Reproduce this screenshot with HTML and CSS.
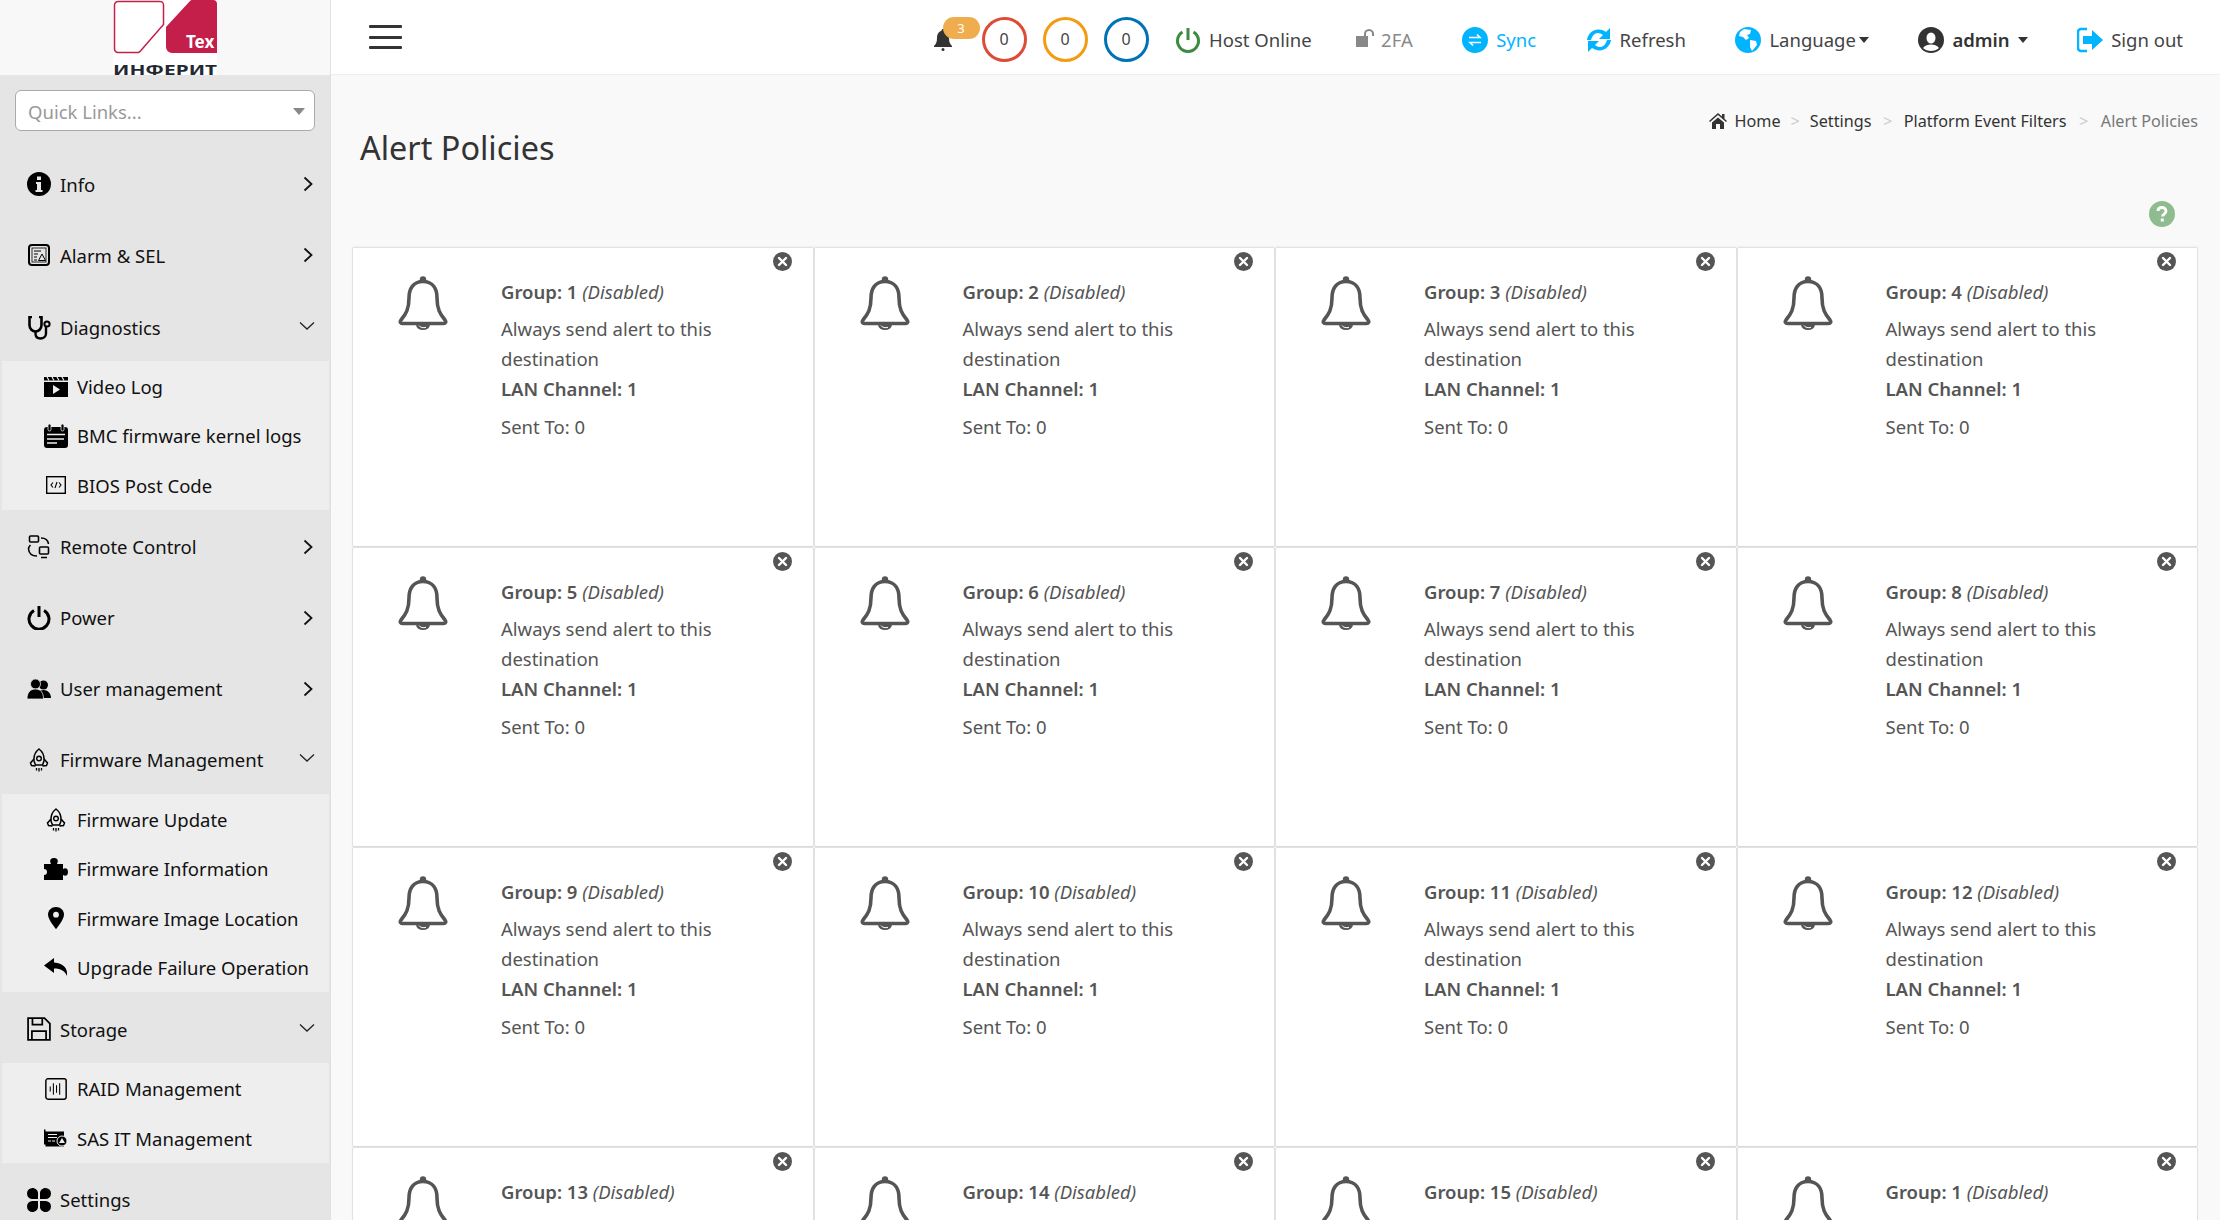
FILE: index.html
```html
<!DOCTYPE html>
<html lang="en">
<head>
<meta charset="utf-8">
<title>Alert Policies</title>
<link rel="stylesheet" href="styles.css">
</head>
<body>
<svg class="sprite" xmlns="http://www.w3.org/2000/svg">
  <symbol id="bell" viewBox="0 0 50 54">
    <circle cx="25" cy="3.500" r="3.200" fill="#555"/>
    <path d="M25 5.500C15 5.500 11 13 11 22c0 11-3 16-8 22-1.500 2-.5 3.500 1.500 3.500h41c2 0 3-1.500 1.500-3.500-5-6-8-11-8-22 0-9-4-16.500-14-16.500Z" fill="#fff" stroke="#555" stroke-width="3.600" stroke-linejoin="round"/>
    <path d="M18 48.500a7 5.500 0 0 0 14 0Z" fill="#555"/>
    <path d="M21 49.500a5 3.500 0 0 0 7 1.800" fill="none" stroke="#fff" stroke-width="1"/>
  </symbol>
  <symbol id="close" viewBox="0 0 19 19">
    <circle cx="9.500" cy="9.500" r="9.500" fill="#555"/>
    <path d="M6 6l7 7M13 6l-7 7" stroke="#fff" stroke-width="2.400" stroke-linecap="round"/>
  </symbol>
  <symbol id="chev-r" viewBox="0 0 10 16"><path d="M1.500 1.500 8.500 8l-7 6.500" fill="none" stroke="#111" stroke-width="1.800"/></symbol>
  <symbol id="chev-d" viewBox="0 0 16 10"><path d="M1 1.500 8 8l7-6.500" fill="none" stroke="#222" stroke-width="1.300"/></symbol>
  <symbol id="i-info" viewBox="0 0 24 24"><circle cx="12" cy="12" r="12" fill="#000"/><path d="M10 4.500h4v3.500h-4zM9 10h5v8h1.500v2h-7v-2H10v-6H9z" fill="#e5e5e5"/></symbol>
  <symbol id="i-alarm" viewBox="0 0 24 24"><rect x="2" y="2" width="20" height="20" rx="3" fill="none" stroke="#000" stroke-width="2"/><rect x="5" y="5" width="14" height="14" fill="none" stroke="#000" stroke-width=".8"/><path d="M7 8h7M7 11h4M7 14h3M7 17h3" stroke="#000" stroke-width="1"/><path d="M15 11l3.500 6.500h-7Z" fill="none" stroke="#000" stroke-width="1"/></symbol>
  <symbol id="i-steth" viewBox="0 0 24 24"><path d="M5 1H2.500v8c0 4 3 6.500 6 6.500s6-2.500 6-6.500V1H12" fill="none" stroke="#000" stroke-width="2.600"/><path d="M8.500 15.500v2c0 3 2 5 5 5s5.500-2 5.500-5V10" fill="none" stroke="#000" stroke-width="2.400"/><circle cx="20" cy="8" r="2.600" fill="none" stroke="#000" stroke-width="2"/></symbol>
  <symbol id="i-video" viewBox="0 0 24 20"><path d="M0 5h24v15H0z" fill="#000"/><path d="M0 0h24v3.500H0z" fill="#000"/><path d="M3 0l2 3.500M8 0l2 3.500M13 0l2 3.500M18 0l2 3.500" stroke="#eee" stroke-width="1.200"/><path d="M9 8l7 4.500-7 4.500z" fill="#eee"/></symbol>
  <symbol id="i-cal" viewBox="0 0 24 24"><rect y="3" width="24" height="21" rx="3" fill="#000"/><rect x="4" y="0" width="3" height="7" rx="1.500" fill="#000" stroke="#eee" stroke-width=".8"/><rect x="17" y="0" width="3" height="7" rx="1.500" fill="#000" stroke="#eee" stroke-width=".8"/><path d="M3 10.500h18M3 15h17M3 19h10" stroke="#eee" stroke-width="1.500"/></symbol>
  <symbol id="i-bios" viewBox="0 0 20 18"><rect x=".7" y=".7" width="18.600" height="16.600" fill="none" stroke="#000" stroke-width="1.400"/><path d="M7 6.500 5 9l2 2.500M13 6.500 15 9l-2 2.500M11 6l-2 6" fill="none" stroke="#000" stroke-width="1.100"/></symbol>
  <symbol id="i-remote" viewBox="0 0 24 24"><rect x="2.500" y="1" width="9" height="6" rx="1" fill="none" stroke="#000" stroke-width="1.600"/><rect x="12.500" y="12" width="9" height="7" rx="1" fill="none" stroke="#000" stroke-width="1.600"/><path d="M14 22.500h6M14 3c4 0 7 2 7.500 6M10 21c-4 0-8-2-8.500-7 0-2 1-3 2-4" fill="none" stroke="#000" stroke-width="1.600"/></symbol>
  <symbol id="i-power" viewBox="0 0 24 24"><path d="M7 4.500a10 10 0 1 0 10 0" fill="none" stroke="#000" stroke-width="3"/><path d="M12 0v11" stroke="#000" stroke-width="3"/></symbol>
  <symbol id="i-users" viewBox="0 0 24 20"><circle cx="16.500" cy="6" r="4.500" fill="#000"/><path d="M10 19c0-5 2.500-8 6.500-8s7.500 3 7.500 8z" fill="#000"/><circle cx="8.500" cy="5" r="5" fill="#000" stroke="#e5e5e5" stroke-width=".8"/><path d="M0 20c0-6 3-10 8.500-10s8 4 8 10z" fill="#000" stroke="#e5e5e5" stroke-width=".8"/></symbol>
  <symbol id="i-rocket" viewBox="0 0 24 24"><path d="M12 1c4 3 5.500 7 5 12l-1.500 4h-7L7 13C6.500 8 8 4 12 1Z" fill="none" stroke="#000" stroke-width="1.500"/><path d="M7 11 3.500 15l1 2.500 4 .5M17 11l3.500 4-1 2.500-4 .5" fill="none" stroke="#000" stroke-width="1.500"/><circle cx="12" cy="10.500" r="2.300" fill="none" stroke="#000" stroke-width="1.400"/><path d="M9.500 20v2.500M12 20v3.500M14.500 20v2.500" stroke="#000" stroke-width="1.300"/></symbol>
  <symbol id="i-puzzle" viewBox="0 0 24 22"><path d="M0 6h7c-2-4 0-6 3-6s5 2 3 6h6v5c3-2 5 0 5 3s-2 5-5 3v5H0v-5c2 0 3-1 3-3s-1-3-3-3z" fill="#000"/></symbol>
  <symbol id="i-pin" viewBox="0 0 16 22"><path d="M8 0c4.500 0 8 3.300 8 7.700C16 12.500 8 22 8 22S0 12.500 0 7.700C0 3.300 3.500 0 8 0Z" fill="#000"/><circle cx="8" cy="7.700" r="2.900" fill="#eee"/></symbol>
  <symbol id="i-reply" viewBox="0 0 24 18"><path d="M10 0 0 7.500 10 15v-4.500c7 0 11 2.500 13 7.500 1-8-4-13-13-13.500z" fill="#000"/></symbol>
  <symbol id="i-save" viewBox="0 0 22 22"><path d="M1 1h15l5 5v15H1z" fill="none" stroke="#000" stroke-width="1.600"/><path d="M5 1v6h9V1M4.500 21v-8h13v8" fill="none" stroke="#000" stroke-width="1.600"/></symbol>
  <symbol id="i-raid" viewBox="0 0 21 21"><rect x=".8" y=".8" width="19.400" height="19.400" rx="2" fill="none" stroke="#000" stroke-width="1.400"/><path d="M5 8v5M8 5v11M11 7v7M14 5v11" stroke="#000" stroke-width="1"/></symbol>
  <symbol id="i-sas" viewBox="0 0 24 17"><path d="M0 0h1.500v2H20v15H1.500v-2H0z" fill="#000"/><circle cx="18" cy="11.500" r="5" fill="#000" stroke="#eee" stroke-width="1"/><path d="M18 8.500l3 5h-6z" fill="#eee"/><path d="M4 5h9M4 8h9M4 11.500h3M8 11.500h3" stroke="#eee" stroke-width="1.200"/></symbol>
  <symbol id="i-settings" viewBox="0 0 24 24"><path d="M5.500 0C8.500 0 11 2.500 11 5v6H5.500a5.500 5.500 0 0 1 0-11zM18.500 0a5.500 5.500 0 0 1 0 11H13V5c0-2.500 2.500-5 5.500-5zM5.500 13H11v6c0 2.500-2.500 5-5.500 5a5.500 5.500 0 0 1 0-11zM13 13h5.500a5.500 5.500 0 0 1 0 11C15.500 24 13 21.500 13 19z" fill="#000"/></symbol>
</svg>

<aside class="sidebar">
  <div class="brand">
    <svg class="logo" viewBox="0 0 104 75" xmlns="http://www.w3.org/2000/svg">
      <rect width="104" height="75" fill="#fff"/>
      <path d="M5 1.500h42a3.500 3.500 0 0 1 3.500 3.500v19.500L27 51.500a3 3 0 0 1-2 1H5A3.500 3.500 0 0 1 1.500 49V5A3.500 3.500 0 0 1 5 1.500Z" fill="#fff" stroke="#c41e4a" stroke-width="1.500"/>
      <path d="M53 27 77 1a3 3 0 0 1 2-1h21a4 4 0 0 1 4 4v49H59a6 6 0 0 1-6-6Z" fill="#c41e4a"/>
      <text x="73" y="48" class="logo-tex">Tex</text>
      <text x="0" y="74.500" class="logo-name" textLength="104" lengthAdjust="spacingAndGlyphs">ИНФЕРИТ</text>
    </svg>
  </div>
  <div class="quick"><div class="quick-box"><span>Quick Links...</span><i class="quick-caret"></i></div></div>
  <nav class="nav">
    <a class="row"><svg class="ic w24"><use href="#i-info"/></svg><span class="label">Info</span><svg class="chev-r"><use href="#chev-r"/></svg></a>
    <a class="row"><svg class="ic w24"><use href="#i-alarm"/></svg><span class="label">Alarm &amp; SEL</span><svg class="chev-r"><use href="#chev-r"/></svg></a>
    <a class="row open"><svg class="ic w24"><use href="#i-steth"/></svg><span class="label">Diagnostics</span><svg class="chev-d"><use href="#chev-d"/></svg></a>
    <div class="sub">
      <a class="subrow"><svg class="ic w24 h20"><use href="#i-video"/></svg><span>Video Log</span></a>
      <a class="subrow"><svg class="ic w24"><use href="#i-cal"/></svg><span>BMC firmware kernel logs</span></a>
      <a class="subrow"><svg class="ic w24 h18"><use href="#i-bios"/></svg><span>BIOS Post Code</span></a>
    </div>
    <a class="row"><svg class="ic w24"><use href="#i-remote"/></svg><span class="label">Remote Control</span><svg class="chev-r"><use href="#chev-r"/></svg></a>
    <a class="row"><svg class="ic w24"><use href="#i-power"/></svg><span class="label">Power</span><svg class="chev-r"><use href="#chev-r"/></svg></a>
    <a class="row"><svg class="ic w24 h20"><use href="#i-users"/></svg><span class="label">User management</span><svg class="chev-r"><use href="#chev-r"/></svg></a>
    <a class="row open"><svg class="ic w24"><use href="#i-rocket"/></svg><span class="label">Firmware Management</span><svg class="chev-d"><use href="#chev-d"/></svg></a>
    <div class="sub">
      <a class="subrow"><svg class="ic w24"><use href="#i-rocket"/></svg><span>Firmware Update</span></a>
      <a class="subrow"><svg class="ic w24 h22"><use href="#i-puzzle"/></svg><span>Firmware Information</span></a>
      <a class="subrow"><svg class="ic w24 h22"><use href="#i-pin"/></svg><span>Firmware Image Location</span></a>
      <a class="subrow"><svg class="ic w24 h18"><use href="#i-reply"/></svg><span>Upgrade Failure Operation</span></a>
    </div>
    <a class="row open"><svg class="ic w24"><use href="#i-save"/></svg><span class="label">Storage</span><svg class="chev-d"><use href="#chev-d"/></svg></a>
    <div class="sub">
      <a class="subrow"><svg class="ic w24 h22"><use href="#i-raid"/></svg><span>RAID Management</span></a>
      <a class="subrow"><svg class="ic w24 h18"><use href="#i-sas"/></svg><span>SAS IT Management</span></a>
    </div>
    <a class="row"><svg class="ic w24"><use href="#i-settings"/></svg><span class="label">Settings</span></a>
  </nav>
</aside>

<main class="main">
  <header class="topbar">
    <button class="burger" aria-label="Menu"><i></i><i></i><i></i></button>
    <div class="status">
      <span class="notify">
        <svg class="notify-bell" viewBox="0 0 18 22" xmlns="http://www.w3.org/2000/svg"><path d="M9 0c1 0 1.500.7 1.500 1.700C14 3 15 6 15 9c0 4 1 6 3 8v1H0v-1c2-2 3-4 3-8 0-3 1-6 4.500-7.300C7.500.7 8 0 9 0Z" fill="#333"/><circle cx="9" cy="20.500" r="1.500" fill="#333"/></svg>
        <b class="badge">3</b>
      </span>
      <span class="ring red">0</span>
      <span class="ring orange">0</span>
      <span class="ring blue">0</span>
    </div>
    <a class="tb host"><svg class="tb-ic" viewBox="0 0 26 26" xmlns="http://www.w3.org/2000/svg"><path d="M7.500 5a10.500 10.500 0 1 0 11 0" fill="none" stroke="#3d8b40" stroke-width="3"/><path d="M13 1v12" stroke="#3d8b40" stroke-width="3"/></svg>Host Online</a>
    <a class="tb tfa"><svg class="tb-ic lock" viewBox="0 0 20 18" xmlns="http://www.w3.org/2000/svg"><path d="M0 7h12v11H0z" fill="#888"/><path d="M9 7V5c0-2 1.500-4 4-4s4 2 4 4v2" fill="none" stroke="#888" stroke-width="2"/></svg>2FA</a>
    <a class="tb sync"><svg class="tb-ic" viewBox="0 0 26 26" xmlns="http://www.w3.org/2000/svg"><circle cx="13" cy="13" r="13" fill="#00b4ff"/><path d="M7 10.500h11l-3-3M19 15.500H8l3 3" fill="none" stroke="#fff" stroke-width="1.600"/></svg>Sync</a>
    <a class="tb"><svg class="tb-ic" viewBox="0 1 26 24" xmlns="http://www.w3.org/2000/svg"><path d="M1 13C2 5 11-1 20 5l4-4v11H13l4-4c-5-4-10-2-12 5zM25 13c-1 8-10 14-19 8l-4 4V14h11l-4 4c5 4 10 2 12-5z" fill="#00b4ff"/></svg>Refresh</a>
    <a class="tb"><svg class="tb-ic" viewBox="0 0 26 26" xmlns="http://www.w3.org/2000/svg"><circle cx="13" cy="13" r="13" fill="#00b4ff"/><path d="M9 2l7 1-1 4-3 1 2 3-3 2-3-3-4-1 1-4zM15 13l6 1 1 4-5 6-2-4z" fill="#fff"/></svg>Language<i class="caret"></i></a>
    <a class="tb admin"><svg class="tb-ic" viewBox="0 0 26 26" xmlns="http://www.w3.org/2000/svg"><circle cx="13" cy="13" r="13" fill="#333"/><ellipse cx="13" cy="11" rx="4.500" ry="5.500" fill="#fff"/><path d="M5 21c2-3 5-3.500 8-3.500s6 .5 8 3.500c-4 4-12 4-16 0z" fill="#fff"/></svg><b>admin</b><i class="caret wide"></i></a>
    <a class="tb"><svg class="tb-ic" viewBox="0 0 26 26" xmlns="http://www.w3.org/2000/svg"><path d="M10 2H4a3 3 0 0 0-3 3v16a3 3 0 0 0 3 3h6" fill="none" stroke="#00b4ff" stroke-width="2.500"/><path d="M6 9h9V3l11 10-11 10v-6H6z" fill="#00b4ff"/></svg>Sign out</a>
  </header>

  <section class="head">
    <h1 class="title">Alert Policies</h1>
    <ol class="crumbs">
      <li><svg class="home" viewBox="0 0 18 16" xmlns="http://www.w3.org/2000/svg"><path d="M9 0l4 3.500V1h2.500v4.700L18 8l-1 1-8-7-8 7-1-1zM3 9.500l6-5 6 5V16h-4v-5H7v5H3z" fill="#333"/></svg>Home</li>
      <li class="sep first">&gt;</li><li>Settings</li>
      <li class="sep second">&gt;</li><li>Platform Event Filters</li>
      <li class="sep">&gt;</li><li class="current">Alert Policies</li>
    </ol>
  </section>
  <div class="helprow"><svg class="help" viewBox="0 0 26 26" xmlns="http://www.w3.org/2000/svg"><circle cx="13" cy="13" r="13" fill="#8fbc8f"/><path d="M9 10c0-2.500 2-3.500 4-3.500s4 1.200 4 3.500c0 3-3.500 3-3.500 5.500" fill="none" stroke="#fff" stroke-width="2.800"/><rect x="11.800" y="17.500" width="3" height="3" fill="#fff"/></svg></div>

  <div class="grid">
    <article class="card"><svg class="x"><use href="#close"/></svg><svg class="bell"><use href="#bell"/></svg><div class="info"><p class="g"><b>Group: 1</b> <em>(Disabled)</em></p><p class="d">Always send alert to this destination</p><p class="l">LAN Channel: 1</p><p class="s">Sent To: 0</p></div></article>
    <article class="card"><svg class="x"><use href="#close"/></svg><svg class="bell"><use href="#bell"/></svg><div class="info"><p class="g"><b>Group: 2</b> <em>(Disabled)</em></p><p class="d">Always send alert to this destination</p><p class="l">LAN Channel: 1</p><p class="s">Sent To: 0</p></div></article>
    <article class="card"><svg class="x"><use href="#close"/></svg><svg class="bell"><use href="#bell"/></svg><div class="info"><p class="g"><b>Group: 3</b> <em>(Disabled)</em></p><p class="d">Always send alert to this destination</p><p class="l">LAN Channel: 1</p><p class="s">Sent To: 0</p></div></article>
    <article class="card"><svg class="x"><use href="#close"/></svg><svg class="bell"><use href="#bell"/></svg><div class="info"><p class="g"><b>Group: 4</b> <em>(Disabled)</em></p><p class="d">Always send alert to this destination</p><p class="l">LAN Channel: 1</p><p class="s">Sent To: 0</p></div></article>
    <article class="card"><svg class="x"><use href="#close"/></svg><svg class="bell"><use href="#bell"/></svg><div class="info"><p class="g"><b>Group: 5</b> <em>(Disabled)</em></p><p class="d">Always send alert to this destination</p><p class="l">LAN Channel: 1</p><p class="s">Sent To: 0</p></div></article>
    <article class="card"><svg class="x"><use href="#close"/></svg><svg class="bell"><use href="#bell"/></svg><div class="info"><p class="g"><b>Group: 6</b> <em>(Disabled)</em></p><p class="d">Always send alert to this destination</p><p class="l">LAN Channel: 1</p><p class="s">Sent To: 0</p></div></article>
    <article class="card"><svg class="x"><use href="#close"/></svg><svg class="bell"><use href="#bell"/></svg><div class="info"><p class="g"><b>Group: 7</b> <em>(Disabled)</em></p><p class="d">Always send alert to this destination</p><p class="l">LAN Channel: 1</p><p class="s">Sent To: 0</p></div></article>
    <article class="card"><svg class="x"><use href="#close"/></svg><svg class="bell"><use href="#bell"/></svg><div class="info"><p class="g"><b>Group: 8</b> <em>(Disabled)</em></p><p class="d">Always send alert to this destination</p><p class="l">LAN Channel: 1</p><p class="s">Sent To: 0</p></div></article>
    <article class="card"><svg class="x"><use href="#close"/></svg><svg class="bell"><use href="#bell"/></svg><div class="info"><p class="g"><b>Group: 9</b> <em>(Disabled)</em></p><p class="d">Always send alert to this destination</p><p class="l">LAN Channel: 1</p><p class="s">Sent To: 0</p></div></article>
    <article class="card"><svg class="x"><use href="#close"/></svg><svg class="bell"><use href="#bell"/></svg><div class="info"><p class="g"><b>Group: 10</b> <em>(Disabled)</em></p><p class="d">Always send alert to this destination</p><p class="l">LAN Channel: 1</p><p class="s">Sent To: 0</p></div></article>
    <article class="card"><svg class="x"><use href="#close"/></svg><svg class="bell"><use href="#bell"/></svg><div class="info"><p class="g"><b>Group: 11</b> <em>(Disabled)</em></p><p class="d">Always send alert to this destination</p><p class="l">LAN Channel: 1</p><p class="s">Sent To: 0</p></div></article>
    <article class="card"><svg class="x"><use href="#close"/></svg><svg class="bell"><use href="#bell"/></svg><div class="info"><p class="g"><b>Group: 12</b> <em>(Disabled)</em></p><p class="d">Always send alert to this destination</p><p class="l">LAN Channel: 1</p><p class="s">Sent To: 0</p></div></article>
    <article class="card"><svg class="x"><use href="#close"/></svg><svg class="bell"><use href="#bell"/></svg><div class="info"><p class="g"><b>Group: 13</b> <em>(Disabled)</em></p></div></article>
    <article class="card"><svg class="x"><use href="#close"/></svg><svg class="bell"><use href="#bell"/></svg><div class="info"><p class="g"><b>Group: 14</b> <em>(Disabled)</em></p></div></article>
    <article class="card"><svg class="x"><use href="#close"/></svg><svg class="bell"><use href="#bell"/></svg><div class="info"><p class="g"><b>Group: 15</b> <em>(Disabled)</em></p></div></article>
    <article class="card"><svg class="x"><use href="#close"/></svg><svg class="bell"><use href="#bell"/></svg><div class="info"><p class="g"><b>Group: 1</b> <em>(Disabled)</em></p></div></article>
  </div>
</main>
</body>
</html>
```
FILE: styles.css
```css
* { box-sizing: border-box; }
html, body { margin: 0; height: 1220px; overflow: hidden; }
body { display: flex; font-family: "Noto Sans", "Liberation Sans", sans-serif; font-size: 18.500px; color: #333; background: #f9f9f9; }
.sprite { width: 0; height: 0; position: absolute; }

.sidebar { width: 331px; flex: none; height: 1220px; background: #e5e5e5; border-right: 1px solid #e0e0e0; overflow: hidden; }
.brand { height: 75px; background: #f8f8f8; display: flex; justify-content: center; padding-right: 1px; }
.logo { width: 104px; height: 75px; display: block; }
.logo-tex { font: 700 17px "Noto Sans", sans-serif; fill: #fff; }
.logo-name { font: 700 14.500px "Noto Sans", sans-serif; fill: #1f2a33; }

.quick { padding: 15px 15px 16px; }
.quick-box { height: 41px; background: #fff; border: 1px solid #aaa; border-radius: 6px; display: flex; align-items: center; justify-content: space-between; padding: 1px 9px 0 12px; color: #999; }
.quick-caret { width: 0; height: 0; border-left: 6px solid transparent; border-right: 6px solid transparent; border-top: 7px solid #888; }

.row { height: 71px; display: flex; align-items: center; padding: 3px 17px 0 27px; color: #111; }
.row.open { padding-right: 15px; }
.row.open:nth-child(3) { height: 72px; padding-top: 5px; }
.label { flex: 1; margin-left: 9px; white-space: nowrap; }
.ic { width: 24px; height: 24px; flex: none; }
.h22 { height: 22px; }
.h20 { height: 20px; }
.h18 { height: 18px; }
.chev-r { width: 10px; height: 16px; }
.chev-d { width: 16px; height: 10px; margin-top: -3px; }
.sub { margin: 0 1px 0 2px; padding: 1px 0 0; background: #eee; }
.subrow { height: 49.300px; display: flex; align-items: center; gap: 9px; padding-left: 42px; color: #111; white-space: nowrap; }

.main { flex: 1; min-width: 0; height: 1220px; overflow: hidden; display: flex; flex-direction: column; }
.topbar { height: 75px; flex: none; background: #fff; border-bottom: 1px solid #eee; display: flex; align-items: center; justify-content: flex-end; gap: 49.500px; padding-right: 37px; position: relative; }
.burger { margin-right: auto; margin-left: 38px; width: 33px; height: 24px; padding: 0; border: 0; background: none; display: flex; flex-direction: column; justify-content: space-between; }
.burger i { display: block; height: 3px; background: #333; border-radius: 1px; }
.status { display: flex; align-items: center; gap: 16px; margin-right: -23px; }
.notify { width: 32px; position: relative; height: 30px; margin-right: 0; }
.notify-bell { width: 18px; height: 22px; position: absolute; left: 0; top: 7px; }
.badge { position: absolute; left: 9px; top: -5px; width: 37px; height: 22px; border-radius: 11px; background: #f0ad4e; color: #fff; font-size: 13px; font-weight: 400; text-align: center; line-height: 22px; }
.ring { width: 45px; height: 45px; border: 3.500px solid; border-radius: 50%; display: flex; align-items: center; justify-content: center; font-size: 16px; color: #444; background: #fff; margin-top: 4px; }
.red { border-color: #dd4b39; }
.orange { border-color: #f39c12; }
.blue { border-color: #0073b7; }
.tb { display: flex; align-items: center; gap: 8px; white-space: nowrap; color: #444; margin-top: 5px; font-size: 18.500px; }
.host { margin-right: -5px; }
.tb-ic { width: 26px; height: 26px; flex: none; }
.tb-ic.lock { width: 20px; height: 18px; margin-top: -3px; margin-right: -3px; }
.tfa { color: #888; }
.sync { color: #00b4ff; }
.tb b { font-weight: 600; color: #333; }
.caret { width: 0; height: 0; border-left: 5.500px solid transparent; border-right: 5.500px solid transparent; border-top: 6px solid #333; margin-left: -5px; }
.caret.wide { margin-left: 0; }

.head { height: 126px; flex: none; display: flex; justify-content: space-between; padding: 0 22px 0 29px; }
.title { margin: 49px 0 0; font-size: 32.400px; font-weight: 400; line-height: 46px; color: #333; }
.crumbs { list-style: none; margin: 32px 0 0; padding: 0; display: flex; gap: 12.500px; font-size: 16.200px; line-height: 28px; color: #333; height: 28px; }
.crumbs li { display: flex; align-items: center; }
.crumbs .first { margin: 0 -2.500px; }
.crumbs .second { margin: 0 -1px; }
.home { width: 18px; height: 16px; margin-right: 8px; }
.sep { color: #ccc; }
.current { color: #777; }
.helprow { height: 46px; flex: none; display: flex; justify-content: flex-end; padding-right: 45px; }
.help { width: 26px; height: 26px; }

.grid { display: grid; grid-template-columns: repeat(4, 461.500px); grid-auto-rows: 300px; margin-left: 21px; }
.card { position: relative; background: #fff; border: 1px solid #e2e2e2; display: flex; padding: 28px 40px 0 45px; box-shadow: 0 -1px 2px rgba(0,0,0,.04); border-radius: 2px; }
.x { position: absolute; top: 4px; right: 21px; width: 19px; height: 19px; }
.bell { width: 50px; height: 54px; flex: none; margin-right: 53px; }
.info { color: #555; line-height: 30px; padding-top: 1px; }
.info p { margin: 0; }
.info b, .l { font-weight: 600; }
.g { white-space: nowrap; }
.d { margin-top: 7px !important; }
.s { margin-top: 8px !important; }
```
